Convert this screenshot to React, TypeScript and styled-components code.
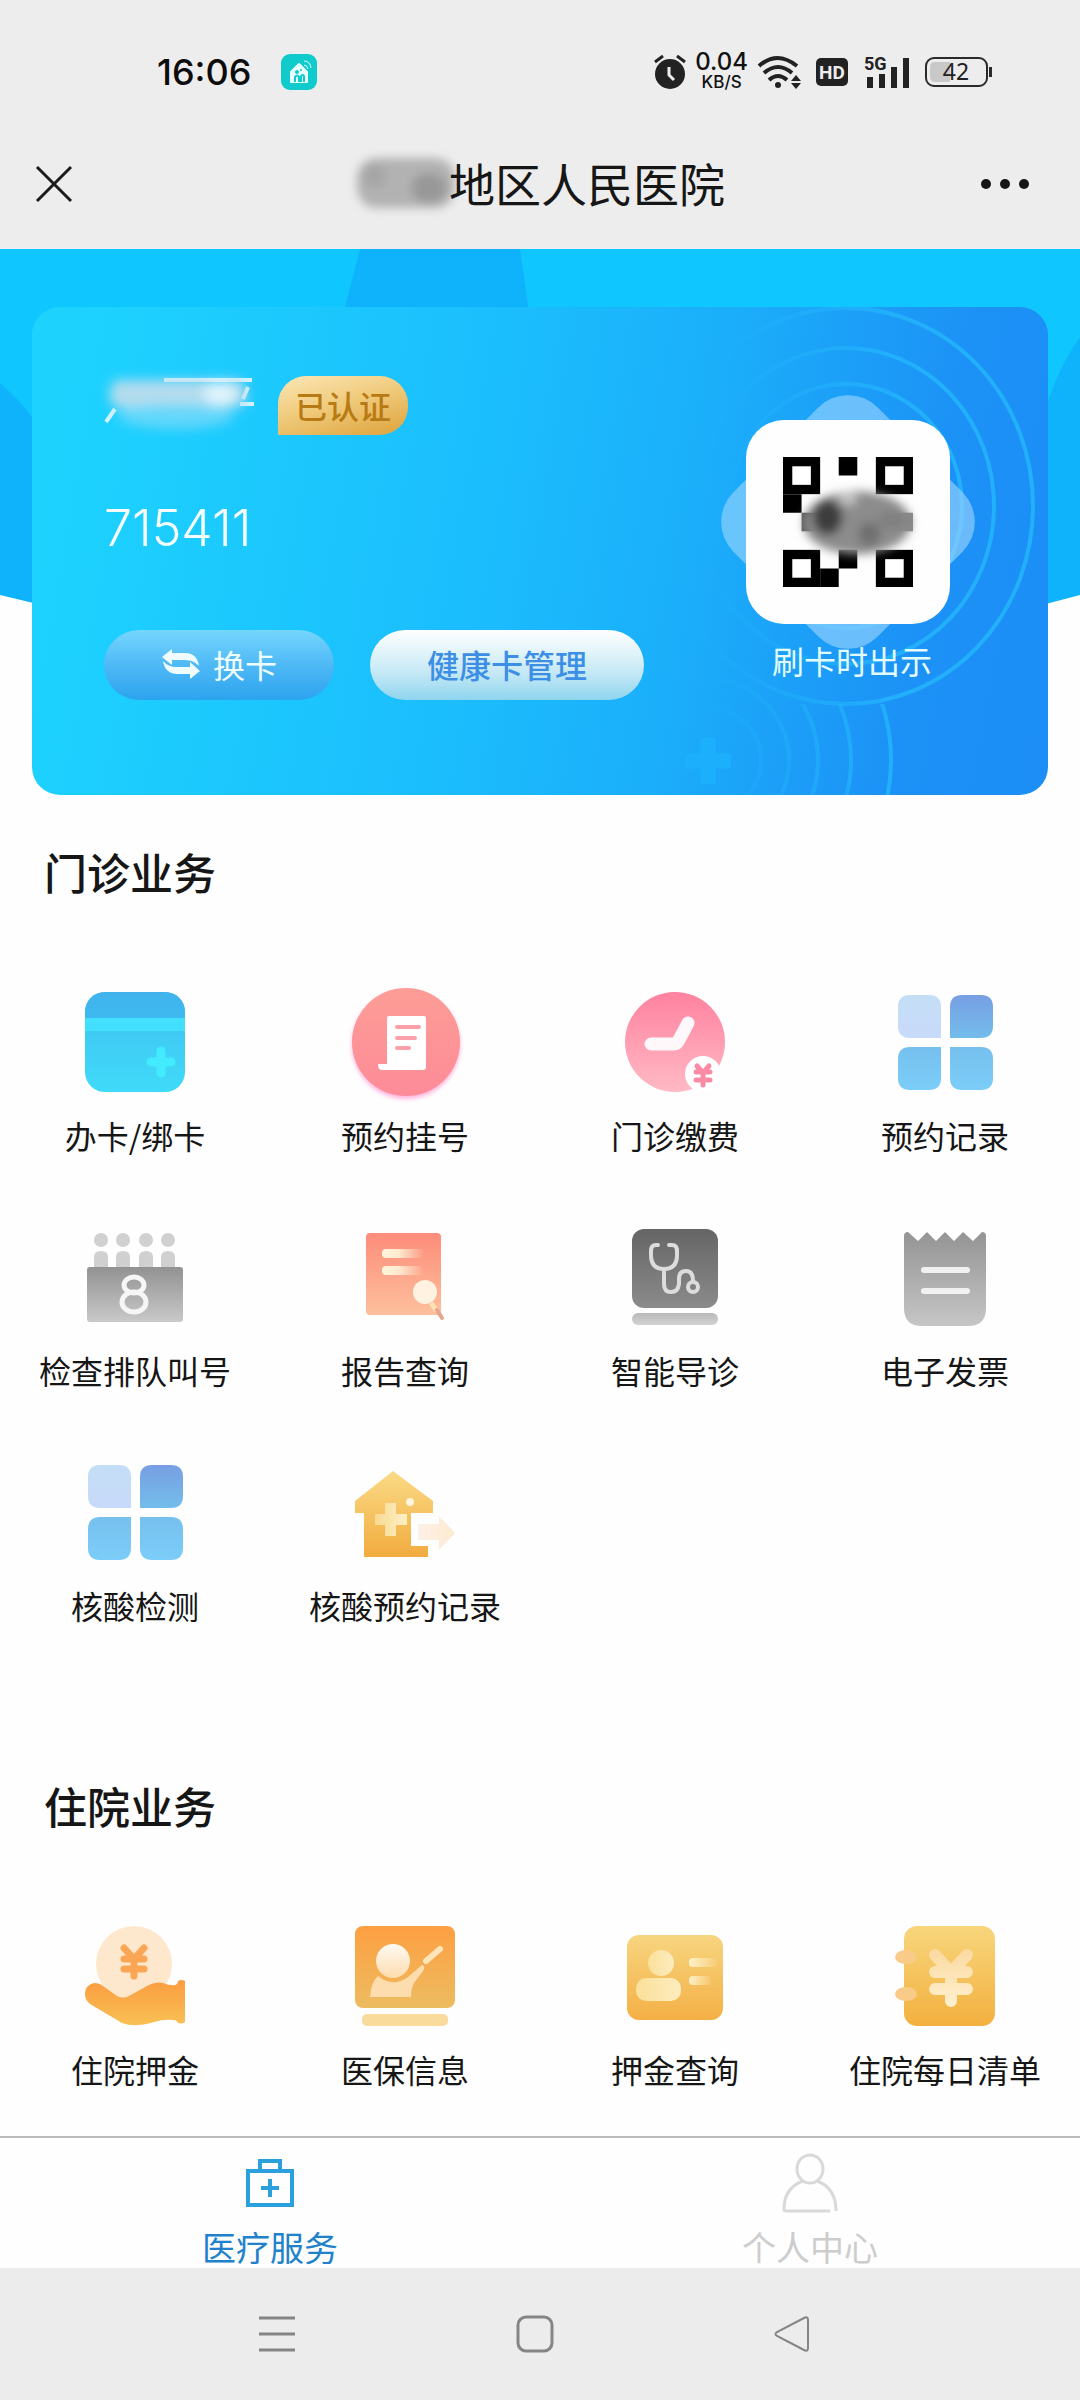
import React, { useState } from "react";
import styled, { createGlobalStyle } from "styled-components";

const cjk = `"Noto Sans CJK SC", "Noto Sans", sans-serif`;
const latin = `Inter, "Noto Sans CJK SC", sans-serif`;

const GlobalStyle = createGlobalStyle`
  *, *::before, *::after { box-sizing: border-box; }
  body { margin: 0; background: #fefefe; font-family: ${cjk}; color: #161616; }
  button { margin: 0; padding: 0; border: 0; background: none; font: inherit; color: inherit; cursor: pointer; }
  h1, h2, p { margin: 0; }
  svg { display: block; flex: none; overflow: visible; }
`;

const Page = styled.div`
  display: flex;
  flex-direction: column;
  min-height: 100vh;
`;

const TopBar = styled.header`
  background: #ededed;
`;

const StatusBar = styled.div`
  display: flex;
  align-items: center;
  justify-content: space-between;
  height: 120px;
  padding: 24px 88px 0 157px;
  font-family: ${latin};
`;

const StatusLeft = styled.div`
  display: flex;
  align-items: center;
  gap: 30px;
`;

const StatusRight = styled.div`
  display: flex;
  align-items: center;
  gap: 15px;
`;

const NetworkGroup = styled.div`
  display: flex;
  align-items: center;
  gap: 9px;
`;

const Clock = styled.time`
  font-size: 36px;
  line-height: 40px;
  font-weight: 500;
  color: #0c0c0c;
`;

const Speed = styled.div`
  display: flex;
  flex-direction: column;
  align-items: center;
  font-weight: 500;
  color: #111;
`;

const SpeedValue = styled.span`
  font-size: 24px;
  line-height: 20px;
`;

const SpeedUnit = styled.span`
  font-size: 17px;
  line-height: 20px;
`;

const TitleBar = styled.div`
  display: grid;
  grid-template-columns: 1fr auto 1fr;
  align-items: center;
  height: 129px;
  padding: 0 34px 2px;
`;

const CloseButton = styled.button`
  justify-self: start;
`;

const MoreButton = styled.button`
  justify-self: end;
  padding-right: 14px !important;
`;

const Title = styled.h1`
  display: flex;
  align-items: center;
  padding-bottom: 4px;
  font-size: 46px;
  line-height: 60px;
  font-weight: 400;
  color: #161616;
`;

const Main = styled.main`
  flex: 1;
`;

const Hero = styled.section`
  position: relative;
  padding: 58px 32px 0;
`;

const HeroArt = styled.svg`
  position: absolute;
  top: 0;
  left: 0;
  width: 100%;
  height: 360px;
`;

const Card = styled.div`
  position: relative;
  display: flex;
  justify-content: space-between;
  padding: 69px 72px 95px;
  border-radius: 28px;
  overflow: hidden;
  background: linear-gradient(100deg, #1dd3fe 4%, #1bbdfd 45%, #1baefa 64%, #1c91f6 86%, #1c8ef6 100%);
`;

const CardArt = styled.svg`
  position: absolute;
  top: 0;
  right: 0;
`;

const CardInfo = styled.div`
  position: relative;
  display: flex;
  flex-direction: column;
  align-items: flex-start;
`;

const NameRow = styled.div`
  display: flex;
  gap: 20px;
`;

const Verified = styled.span`
  height: 59px;
  padding: 0 17px;
  border-radius: 28px 28px 28px 0;
  background: linear-gradient(165deg, #fbe4b0 5%, #eec877 50%, #dfa23a 100%);
  font-size: 32px;
  line-height: 58px;
  font-weight: 500;
  color: #b87a14;
`;

const CardNumber = styled.p`
  margin: 63px 0 72px;
  font-family: ${latin};
  font-size: 50px;
  line-height: 60px;
  font-weight: 300;
  color: #f6feff;
`;

const Actions = styled.div`
  display: flex;
  gap: 36px;
`;

const Pill = styled.button<{ $light?: boolean }>`
  display: flex;
  align-items: center;
  justify-content: center;
  gap: 12px;
  height: 70px;
  padding: 0 57px 2px !important;
  border-radius: 36px;
  font-size: 32px;
  line-height: 40px;
  font-weight: ${(p) => (p.$light ? 500 : 400)};
  color: ${(p) => (p.$light ? "#3d8fe6" : "#f0fdff")};
  background: ${(p) =>
    p.$light
      ? "linear-gradient(#ffffff, #c6e9f5 60%, #8fd5ef)"
      : "linear-gradient(#75d6fd, #4fb9f6 50%, #2ca3ee)"};
`;

const QrColumn = styled.div`
  position: relative;
  display: flex;
  flex-direction: column;
  align-items: center;
  gap: 16px;
  width: 256px;
  padding-top: 44px;
`;

const QrButton = styled.button`
  position: relative;
  display: grid;
  place-items: center;
  width: 204px;
  height: 204px;

  &::before,
  &::after {
    content: "";
    position: absolute;
    inset: 0;
    border-radius: 38px;
  }
  &::before {
    border-radius: 42px;
    background: rgba(160, 215, 255, 0.6);
    transform: rotate(45deg);
  }
  &::after {
    background: #fefefe;
  }
  svg {
    position: relative;
    z-index: 1;
  }
`;

const QrCaption = styled.p`
  padding-left: 8px;
  font-size: 32px;
  line-height: 40px;
  color: #e2fbfb;
`;

const Section = styled.section<{ $spaced?: boolean }>`
  padding-top: ${(p) => (p.$spaced ? 150 : 46)}px;
`;

const SectionTitle = styled.h2`
  padding: 0 44px;
  font-size: 43px;
  line-height: 60px;
  font-weight: 500;
  color: #161616;
`;

const Grid = styled.div`
  display: grid;
  grid-template-columns: repeat(4, 1fr);
  row-gap: 61px;
  margin-top: 80px;
`;

const Item = styled.button`
  display: flex;
  flex-direction: column;
  align-items: center;
  gap: 14px;
  font-size: 32px;
  line-height: 40px;
  white-space: nowrap;
`;

const TabBar = styled.nav`
  display: grid;
  grid-template-columns: 1fr 1fr;
  height: 132px;
  border-top: 2px solid #b9b9b9;
  background: #fefefe;
`;

const Tab = styled.button<{ $active: boolean }>`
  display: flex;
  flex-direction: column;
  align-items: center;
  padding-top: 13px !important;
  gap: 12px;
  font-size: 34px;
  line-height: 40px;
  color: ${(p) => (p.$active ? "#2181cb" : "#cdcdcd")};
`;

const SystemBar = styled.footer`
  display: flex;
  align-items: center;
  justify-content: space-between;
  height: 132px;
  padding: 0 25% 0 24%;
  background: #ececec;
`;

function Icon({ children }: { children: React.ReactNode }) {
  return (
    <svg width="120" height="120" viewBox="0 0 120 120" aria-hidden="true">
      {children}
    </svg>
  );
}

function Grad({ id, from, to, flat }: { id: string; from: string; to: string; flat?: boolean }) {
  return (
    <linearGradient id={id} x1="0" y1="0" x2={flat ? 1 : 0} y2={flat ? 0 : 1}>
      <stop offset="0" stopColor={from} />
      <stop offset="1" stopColor={to} />
    </linearGradient>
  );
}

const BindCardIcon = () => (
  <Icon>
    <defs>
      <Grad id="bc" from="#40c0f1" to="#40daf9" />
      <Grad id="bt" from="#41b2ec" to="#3dbaf0" />
      <clipPath id="bclip"><rect x="10" y="11" width="100" height="100" rx="20" /></clipPath>
    </defs>
    <g clipPath="url(#bclip)">
      <rect x="10" y="11" width="100" height="100" fill="url(#bc)" />
      <rect x="10" y="11" width="100" height="26" fill="url(#bt)" />
      <rect x="10" y="37" width="100" height="13" fill="#42dffe" />
    </g>
    <path d="M86 70v22M76 81h20" stroke="#42ecfe" strokeWidth="9" strokeLinecap="round" />
  </Icon>
);

const RegisterIcon = () => (
  <Icon>
    <defs>
      <Grad id="rg" from="#fd9d96" to="#fd8b98" />
      <filter id="rs" x="-20%" y="-20%" width="140%" height="140%"><feGaussianBlur stdDeviation="2" /></filter>
    </defs>
    <circle cx="61" cy="64" r="54" fill="#ffb3dd" filter="url(#rs)" />
    <circle cx="61" cy="61" r="54" fill="url(#rg)" />
    <path d="M44 35h35q2 0 2 2v49q0 3-3 3H37q-4 0-4-6h9V37q0-2 2-2Z" fill="#fff" />
    <path d="M52 46h22M52 57h18M52 67h12" stroke="#fba0a8" strokeWidth="4" strokeLinecap="round" />
  </Icon>
);

const PayIcon = () => (
  <Icon>
    <defs>
      <Grad id="py" from="#ff829f" to="#ffb9c5" />
    </defs>
    <circle cx="60" cy="61" r="50" fill="url(#py)" />
    <path d="M36 63h23q3 0 5-4l9-17" fill="none" stroke="#fff8fb" strokeWidth="13" strokeLinecap="round" strokeLinejoin="round" />
    <circle cx="88" cy="93" r="18" fill="#fff" />
    <path d="m82 85 6 7 6-7M81 91h14M81 99h14M88 92v12" fill="none" stroke="#fb8aa6" strokeWidth="5" strokeLinecap="round" />
  </Icon>
);

const TilesIcon = ({ id }: { id: string }) => (
  <Icon>
    <defs>
      <Grad id={id + "a"} from="#c4def6" to="#c8dafa" />
      <Grad id={id + "b"} from="#779fe3" to="#73bdeb" />
      <Grad id={id + "c"} from="#76c0ee" to="#7ccdf9" />
    </defs>
    <path d="M25 14h19q12 0 12 12v31H25q-12 0-12-12V26q0-12 12-12Z" fill={`url(#${id}a)`} />
    <path d="M77 14h19q12 0 12 12v19q0 12-12 12H65V26q0-12 12-12Z" fill={`url(#${id}b)`} />
    <path d="M25 66h31v31q0 12-12 12H25q-12 0-12-12V78q0-12 12-12Z" fill={`url(#${id}c)`} />
    <path d="M65 66h31q12 0 12 12v19q0 12-12 12H77q-12 0-12-12Z" fill={`url(#${id}c)`} />
  </Icon>
);

const QueueIcon = () => (
  <Icon>
    <defs><Grad id="qu" from="#929292" to="#c9c9c9" /></defs>
    {[26, 48, 71, 93].map((x) => (
      <g key={x} fill="#d0d0d0">
        <circle cx={x} cy="24" r="7" />
        <path d={`M${x - 7} 52V41q0-6 7-6t7 6v11Z`} />
      </g>
    ))}
    <rect x="12" y="51" width="96" height="55" rx="3" fill="url(#qu)" />
    <g fill="none" stroke="#f6f6f6" strokeWidth="5">
      <ellipse cx="59" cy="69" rx="10" ry="8" />
      <ellipse cx="59" cy="86" rx="12" ry="10" />
    </g>
  </Icon>
);

const ReportIcon = () => (
  <Icon>
    <defs>
      <Grad id="rp" from="#fd8c7b" to="#fdc09d" />
      <linearGradient id="rl" x1="0" x2="1">
        <stop offset="0" stopColor="#fff6dd" />
        <stop offset=".4" stopColor="#ffe9cf" />
        <stop offset="1" stopColor="#ffe9cf" stopOpacity="0" />
      </linearGradient>
    </defs>
    <rect x="21" y="17" width="75" height="82" rx="4" fill="url(#rp)" />
    <rect x="37" y="33" width="42" height="9" rx="4" fill="url(#rl)" />
    <rect x="37" y="50" width="42" height="9" rx="4" fill="url(#rl)" />
    <path d="m86 87 6 8" stroke="#ffe0b4" strokeWidth="5" />
    <path d="m92 94 5 8" stroke="#e9a48d" strokeWidth="4" strokeLinecap="round" />
    <circle cx="80" cy="76" r="12" fill="#fff2e0" />
  </Icon>
);

const GuideIcon = () => (
  <Icon>
    <defs><Grad id="gd" from="#656565" to="#8b8b8b" /><Grad id="gb" from="#b9b9b9" to="#d2d2d2" /></defs>
    <rect x="17" y="13" width="86" height="79" rx="12" fill="url(#gd)" />
    <rect x="17" y="97" width="86" height="12" rx="6" fill="url(#gb)" />
    <g fill="none" stroke="#dcdcdc" strokeWidth="4" strokeLinecap="round">
      <path d="M43 29h-2q-5 0-5 6v4q0 14 13 14t13-14v-4q0-6-5-6h-3M49 53v15q0 8 7 8t8-8v-5q0-8 7-8t7 10" />
      <circle cx="78" cy="71" r="5" />
    </g>
  </Icon>
);

const InvoiceIcon = () => (
  <Icon>
    <defs><Grad id="iv" from="#949494" to="#c6c6c6" /></defs>
    <path d="M19 20q0-4 4-4l10 9 9-9 9 9 9-9 9 9 9-9 10 9 9-9q4 0 4 4v72q0 18-18 18H37q-18 0-18-18Z" fill="url(#iv)" />
    <path d="M39 54h43M39 75h43" stroke="#f1f1f1" strokeWidth="6" strokeLinecap="round" />
  </Icon>
);

const HouseIcon = () => (
  <Icon>
    <defs>
      <Grad id="hs" from="#fadb86" to="#f2ab3e" />
      <Grad id="hp" from="#f8d992" to="#fdf0c4" flat />
      <Grad id="ha" from="#fdf0e8" to="#fdebcf" flat />
    </defs>
    <path d="m48 20 40 30v12H66v33h17v11H19V62h-9V50Z" fill="url(#hs)" />
    <path d="M40 52h11v11h11v11H51v11H40V74H30V63h10Z" fill="url(#hp)" />
    <circle cx="65" cy="51" r="4" fill="#fff6dc" />
    <path d="M73 73h21v-8l16 17-16 17V89H73Z" fill="url(#ha)" />
  </Icon>
);

const DepositIcon = () => (
  <Icon>
    <defs><Grad id="dp" from="#fb9d41" to="#f9c054" /></defs>
    <circle cx="59" cy="49" r="38" fill="#fde8cd" />
    <path d="m49 33 10 11 10-11M49 44h20M49 54h20M59 44v17" fill="none" stroke="#fba654" strokeWidth="7" strokeLinecap="round" />
    <path d="M15 89q-5-4-5-10 0-9 9-11 6 0 9 3l14 10q6 3 12 0l18-10q8-5 16-3 8 3 12 2 3-1 3-4 3-2 7 0v41q-4 3-8 0 0-2-4-2-9-1-19 2-20 6-32 1Z" fill="url(#dp)" />
  </Icon>
);

const InsuranceIcon = () => (
  <Icon>
    <defs><Grad id="is" from="#fd9f42" to="#edbc60" /><Grad id="ip" from="#fffaf2" to="#fddcae" /></defs>
    <rect x="10" y="11" width="100" height="82" rx="8" fill="url(#is)" />
    <rect x="17" y="99" width="86" height="12" rx="5" fill="#f9dc9b" />
    <circle cx="48" cy="46" r="17" fill="url(#ip)" />
    <path d="M25 82q1-15 8-21 15 12 30 1l14-12q4 1 1 6l-9 12q-3 6-3 14Z" fill="#fddcad" />
    <path d="m81 46 14-12" stroke="#ffe5b8" strokeWidth="6" strokeLinecap="round" />
  </Icon>
);

const DepositQueryIcon = () => (
  <Icon>
    <defs>
      <Grad id="dq" from="#f7d580" to="#f4b045" />
      <Grad id="dh" from="#fae09a" to="#fdecbf" flat />
      <linearGradient id="dl" x1="0" x2="1">
        <stop offset="0" stopColor="#fff1c8" />
        <stop offset="1" stopColor="#fff1c8" stopOpacity="0.1" />
      </linearGradient>
    </defs>
    <rect x="12" y="20" width="96" height="85" rx="12" fill="url(#dq)" />
    <circle cx="46" cy="48" r="13" fill="url(#dh)" />
    <rect x="21" y="63" width="45" height="23" rx="10" fill="url(#dh)" />
    <rect x="74" y="43" width="28" height="9" rx="4" fill="url(#dl)" />
    <rect x="74" y="61" width="22" height="9" rx="4" fill="url(#dl)" />
  </Icon>
);

const DailyBillIcon = () => (
  <Icon>
    <defs>
      <Grad id="db" from="#f8d67c" to="#f3b03f" />
      <linearGradient id="dy" gradientUnits="userSpaceOnUse" x1="0" y1="33" x2="0" y2="92">
        <stop offset="0" stopColor="#fbd9a0" />
        <stop offset="1" stopColor="#fff0d0" />
      </linearGradient>
    </defs>
    <rect x="19" y="11" width="91" height="100" rx="13" fill="url(#db)" />
    <ellipse cx="21" cy="42" rx="11" ry="7" fill="#f8cc88" />
    <ellipse cx="21" cy="79" rx="11" ry="7" fill="#f8cc88" />
    <path d="m50 40 16 17 16-17M50 57h32M50 74h32M66 57v29" fill="none" stroke="url(#dy)" strokeWidth="12" strokeLinecap="round" />
  </Icon>
);

const outpatient = [
  { label: "办卡/绑卡", icon: <BindCardIcon /> },
  { label: "预约挂号", icon: <RegisterIcon /> },
  { label: "门诊缴费", icon: <PayIcon /> },
  { label: "预约记录", icon: <TilesIcon id="t1" /> },
  { label: "检查排队叫号", icon: <QueueIcon /> },
  { label: "报告查询", icon: <ReportIcon /> },
  { label: "智能导诊", icon: <GuideIcon /> },
  { label: "电子发票", icon: <InvoiceIcon /> },
  { label: "核酸检测", icon: <TilesIcon id="t2" /> },
  { label: "核酸预约记录", icon: <HouseIcon /> },
];

const inpatient = [
  { label: "住院押金", icon: <DepositIcon /> },
  { label: "医保信息", icon: <InsuranceIcon /> },
  { label: "押金查询", icon: <DepositQueryIcon /> },
  { label: "住院每日清单", icon: <DailyBillIcon /> },
];

function Services({ title, items, spaced }: { title: string; items: typeof outpatient; spaced?: boolean }) {
  return (
    <Section $spaced={spaced}>
      <SectionTitle>{title}</SectionTitle>
      <Grid>
        {items.map((it) => (
          <Item key={it.label} type="button">
            {it.icon}
            {it.label}
          </Item>
        ))}
      </Grid>
    </Section>
  );
}

function StatusIcons() {
  return (
    <StatusRight>
      <NetworkGroup>
        <svg width="32" height="36" viewBox="0 0 32 36" aria-label="闹钟">
          <circle cx="16" cy="20" r="15" fill="#222" />
          <path d="m1 8 8-6M31 8l-8-6" stroke="#222" strokeWidth="3" />
          <path d="M15 13v8l5 5" fill="none" stroke="#ededed" strokeWidth="3" />
        </svg>
        <Speed>
          <SpeedValue>0.04</SpeedValue>
          <SpeedUnit>KB/S</SpeedUnit>
        </Speed>
        <svg width="44" height="34" viewBox="0 0 44 34" aria-label="无线网络">
          <g fill="none" stroke="#222" strokeWidth="4">
            <path d="M2 11q18-16 38 0" />
            <path d="M7 18q14-12 28 0" />
            <path d="M12 25q9-8 18 0" />
          </g>
          <circle cx="21" cy="30" r="3" fill="#222" />
          <path d="m34 26 5-6 5 6ZM34 28l5 6 5-6Z" fill="#222" />
        </svg>
      </NetworkGroup>
      <svg width="32" height="28" viewBox="0 0 32 28" aria-label="高清通话">
        <rect width="32" height="28" rx="5" fill="#222" />
        <text x="16" y="21" textAnchor="middle" fontFamily="Roboto, sans-serif" fontWeight="700" fontSize="19" fill="#ededed">HD</text>
      </svg>
      <svg width="47" height="40" viewBox="0 0 47 40" aria-label="移动信号">
        <path d="M7 25v11M19 22v14M31 15v21M43 6v30" stroke="#222" strokeWidth="6" />
        <text x="1" y="18" fontFamily="Roboto, sans-serif" fontWeight="700" fontSize="18" fill="#222" stroke="#ededed" strokeWidth="2" paintOrder="stroke">5G</text>
      </svg>
      <svg width="67" height="30" viewBox="0 0 67 30" aria-label="电量">
        <rect x="1" y="1" width="61" height="28" rx="8" fill="none" stroke="#2a2a2a" strokeWidth="2" />
        <path d="M10 5h15v20H10q-5 0-5-5V10q0-5 5-5Z" fill="#c9c9c9" />
        <rect x="64" y="10" width="3" height="10" fill="#2a2a2a" />
        <text x="31" y="23" textAnchor="middle" fontFamily="Noto Sans, sans-serif" fontSize="23" fill="#222">42</text>
      </svg>
    </StatusRight>
  );
}

function QrCode() {
  return (
    <svg width="130" height="130" viewBox="0 0 14 14" aria-label="二维码">
      <defs>
        <filter id="qb" x="-30%" y="-30%" width="160%" height="160%"><feGaussianBlur stdDeviation="0.5" /></filter>
      </defs>
      {[[0, 0], [10, 0], [0, 10], [10, 10]].map(([x, y]) => (
        <g key={`${x}-${y}`}>
          <rect x={x} y={y} width="4" height="4" />
          <rect x={x + 1} y={y + 1} width="2" height="2" fill="#fff" />
        </g>
      ))}
      <path d="M6 0h2v2H6ZM0 4h2v2H0ZM4 12h2v2H4ZM6 10h2v2H6Z" />
      <path d="M2 6h2v2H2Z" fill="#555" />
      <rect x="12" y="6" width="2" height="2" fill="#888" />
      <g filter="url(#qb)">
        <ellipse cx="8" cy="7.1" rx="5.8" ry="3.4" fill="#8c8c8c" />
        <ellipse cx="4.8" cy="6.5" rx="1.6" ry="1.9" fill="#3c3c3c" />
        <ellipse cx="9.3" cy="8.3" rx="1.2" ry="1.3" fill="#707070" />
        <ellipse cx="7" cy="4.5" rx="1" ry=".7" fill="#c2c2c2" />
        <ellipse cx="11.8" cy="6.8" rx="1.6" ry="1" fill="#808080" />
      </g>
    </svg>
  );
}

export default function App() {
  const [tab, setTab] = useState(0);
  return (
    <Page>
      <GlobalStyle />
      <TopBar>
        <StatusBar>
          <StatusLeft>
            <Clock>16:06</Clock>
            <svg width="36" height="36" viewBox="0 0 36 36" aria-hidden="true">
              <rect width="36" height="36" rx="9" fill="#10cbcb" />
              <path d="m10 18 8-8 8 8v10H10Z" fill="#e8ffff" stroke="#e8ffff" strokeWidth="2" strokeLinejoin="round" />
              <path d="M23 11q3 0 4 4M23 7q6 0 7 7" fill="none" stroke="#e8ffff" strokeWidth="1" />
              <circle cx="16" cy="18" r="2" fill="#10cbcb" />
              <circle cx="20" cy="16" r="1" fill="#10cbcb" />
              <path d="M14 28v-5q2-3 4 0v5M20 28v-6q2-2 3 0v6" fill="none" stroke="#10cbcb" strokeWidth="2" />
            </svg>
          </StatusLeft>
          <StatusIcons />
        </StatusBar>
        <TitleBar>
          <CloseButton type="button" aria-label="关闭">
            <svg width="40" height="40" viewBox="0 0 40 40">
              <path d="m3 3 34 34M37 3 3 37" stroke="#1c1c1c" strokeWidth="3" />
            </svg>
          </CloseButton>
          <Title>
            <svg width="94" height="64" viewBox="0 0 94 64" aria-hidden="true">
              <defs><filter id="tb" x="-30%" y="-30%" width="160%" height="160%"><feGaussianBlur stdDeviation="5" /></filter></defs>
              <g filter="url(#tb)">
                <rect x="2" y="8" width="98" height="50" rx="20" fill="#b2b2b2" />
                <ellipse cx="20" cy="26" rx="12" ry="12" fill="#a6a6a6" />
                <ellipse cx="74" cy="38" rx="18" ry="15" fill="#989898" />
              </g>
            </svg>
            地区人民医院
          </Title>
          <MoreButton type="button" aria-label="更多">
            <svg width="52" height="12" viewBox="0 0 52 12" fill="#161616">
              <circle cx="6" cy="6" r="5" />
              <circle cx="25" cy="6" r="5" />
              <circle cx="44" cy="6" r="5" />
            </svg>
          </MoreButton>
        </TitleBar>
      </TopBar>

      <Main>
        <Hero>
          <HeroArt viewBox="0 0 1080 360" preserveAspectRatio="none" aria-hidden="true">
            <path d="M0 0h1080v345q-540 120-1080 0Z" fill="#0fc7fe" />
            <path d="M360 0h160l10 70H342Z" fill="#0eb3fc" />
            <path d="M0 134q30 26 50 60v164L0 346ZM1080 88q-22 30-38 82v186l38-10Z" fill="#0eb3fc" />
          </HeroArt>
          <Card>
            <CardArt width="480" height="488" viewBox="568 307 480 488" aria-hidden="true">
              <defs>
                <linearGradient id="ring" gradientUnits="userSpaceOnUse" x1="700" y1="0" x2="900" y2="0">
                  <stop offset="0" stopColor="#22b4fc" stopOpacity="0" />
                  <stop offset="1" stopColor="#22b0fb" />
                </linearGradient>
                <clipPath id="low"><rect x="568" y="704" width="480" height="100" /></clipPath>
              </defs>
              <g fill="none" stroke="url(#ring)" strokeWidth="4">
                <ellipse cx="846" cy="506" rx="187" ry="198" />
                <ellipse cx="846" cy="506" rx="148" ry="158" />
                <ellipse cx="846" cy="506" rx="116" ry="122" />
                <circle cx="708" cy="760" r="53" />
                <circle cx="708" cy="760" r="81" />
                <g clipPath="url(#low)">
                  <circle cx="708" cy="760" r="110" />
                  <circle cx="708" cy="760" r="143" />
                  <circle cx="708" cy="760" r="183" />
                </g>
              </g>
              <path d="M708 738v46M685 761h46" stroke="#1caffc" strokeWidth="15" />
            </CardArt>
            <CardInfo>
              <NameRow>
                <svg width="154" height="59" viewBox="0 0 154 59" aria-hidden="true">
                  <defs><filter id="nb" x="-30%" y="-50%" width="160%" height="200%"><feGaussianBlur stdDeviation="6" /></filter></defs>
                  <path d="m2 46 9-13M60 4h88M144 11l-5 12M136 28h14" stroke="#d3f3fd" strokeWidth="4" />
                  <g filter="url(#nb)">
                    <rect x="6" y="4" width="136" height="28" rx="10" fill="#b4dcee" />
                    <ellipse cx="72" cy="40" rx="58" ry="13" fill="#7fdcfb" opacity=".7" />
                    <ellipse cx="116" cy="18" rx="16" ry="12" fill="#def3fd" />
                  </g>
                </svg>
                <Verified>已认证</Verified>
              </NameRow>
              <CardNumber>715411</CardNumber>
              <Actions>
                <Pill type="button">
                  <svg width="40" height="30" viewBox="0 0 40 30" fill="#effcff" aria-hidden="true">
                    <path d="M11 0v4h13q12 0 14 13-5-6-14-6H11v5L1 8ZM29 30v-5H17Q4 25 2 12q5 6 14 6h13v-5l10 9Z" />
                  </svg>
                  换卡
                </Pill>
                <Pill type="button" $light>健康卡管理</Pill>
              </Actions>
            </CardInfo>
            <QrColumn>
              <QrButton type="button" aria-label="二维码">
                <QrCode />
              </QrButton>
              <QrCaption>刷卡时出示</QrCaption>
            </QrColumn>
          </Card>
        </Hero>
        <Services title="门诊业务" items={outpatient} />
        <Services title="住院业务" items={inpatient} spaced />
      </Main>

      <TabBar>
        <Tab type="button" $active={tab === 0} onClick={() => setTab(0)}>
          <svg width="56" height="64" viewBox="0 0 56 64" aria-hidden="true">
            <g fill="none" stroke={tab === 0 ? "#2ca0dc" : "#d4d4d4"} strokeWidth="4">
              <path d="M6 20h44v34H6ZM18 20V10h20v10M28 28v18M19 37h18" />
            </g>
          </svg>
          医疗服务
        </Tab>
        <Tab type="button" $active={tab === 1} onClick={() => setTab(1)}>
          <svg width="60" height="64" viewBox="0 0 60 64" aria-hidden="true">
            <g fill="none" stroke={tab === 1 ? "#2ca0dc" : "#d9d9d9"} strokeWidth="3">
              <ellipse cx="30" cy="18" rx="13" ry="14" />
              <path d="M23 30Q4 37 4 58q0 2 2 2h44M37 30q19 7 19 30" />
            </g>
          </svg>
          个人中心
        </Tab>
      </TabBar>
      <SystemBar>
        <button type="button" aria-label="最近任务">
          <svg width="36" height="36" viewBox="0 0 36 36">
            <path d="M0 2h36M0 18h36M0 34h36" stroke="#858585" strokeWidth="3" />
          </svg>
        </button>
        <button type="button" aria-label="主页">
          <svg width="36" height="36" viewBox="0 0 36 36">
            <rect x="1" y="1" width="34" height="34" rx="8" fill="none" stroke="#858585" strokeWidth="3" />
          </svg>
        </button>
        <button type="button" aria-label="返回">
          <svg width="36" height="36" viewBox="0 0 36 36">
            <path d="M30 2q4-2 4 2v28q0 4-4 2L3 20q-3-2 0-4Z" fill="none" stroke="#858585" strokeWidth="2" />
          </svg>
        </button>
      </SystemBar>
    </Page>
  );
}
